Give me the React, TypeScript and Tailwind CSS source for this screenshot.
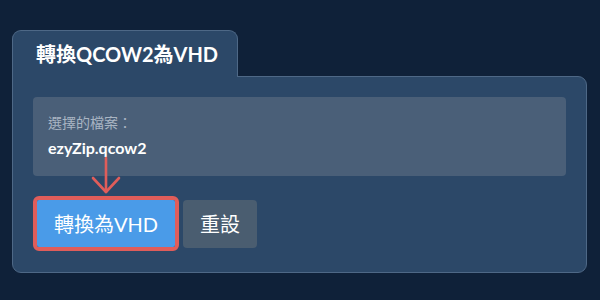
export default function App() {
  return (
    <div
      className="relative w-[600px] h-[300px] bg-[#0f2139] pt-[30px] pl-[12px] pr-[13px]"
      style={{ fontFamily: 'Lato, "Noto Sans CJK TC", sans-serif' }}
    >
      {/* tab */}
      <div className="relative z-10 -mb-px flex h-[47px] w-[226px] items-start rounded-t-[9px] border border-b-0 border-[#4e6886] bg-[#2c4868] pl-[23px] pt-[9px]">
        <h1 className="text-[20px] font-bold leading-[28px] text-white">轉換QCOW2為VHD</h1>
      </div>

      {/* panel */}
      <div className="h-[197px] rounded-b-[9px] rounded-tr-[9px] border border-[#4e6886] bg-[#2c4868] p-5">
        <div className="h-[79px] rounded-[4px] bg-[#4a5f78] px-[15px] pt-[17px]">
          <p className="text-[14px] leading-[18px] text-[#a9b5c3]">選擇的檔案：</p>
          <p className="mt-[6px] text-[16px] font-bold leading-[20px] text-white">ezyZip.qcow2</p>
        </div>

        <div className="mt-5 flex items-center gap-1">
          <div className="rounded-[6px] border-4 border-[#e05d5a]">
            <button className="h-[47px] rounded-[2px] bg-[#4a9be8] px-[17px] text-[20px] text-white">
              轉換為VHD
            </button>
          </div>
          <button className="h-[48px] rounded-[4px] bg-[#4a5d70] px-[17px] text-[20px] text-white">
            重設
          </button>
        </div>
      </div>

      {/* annotation arrow */}
      <svg
        className="absolute left-[90px] top-[156px]"
        width="32"
        height="40"
        viewBox="0 0 32 40"
        fill="none"
        stroke="#e05d5a"
        strokeWidth="2.6"
        strokeLinecap="round"
        strokeLinejoin="round"
      >
        <path d="M16 2 V36" />
        <path d="M3 22 L16 36 L29 22" />
      </svg>
    </div>
  );
}
